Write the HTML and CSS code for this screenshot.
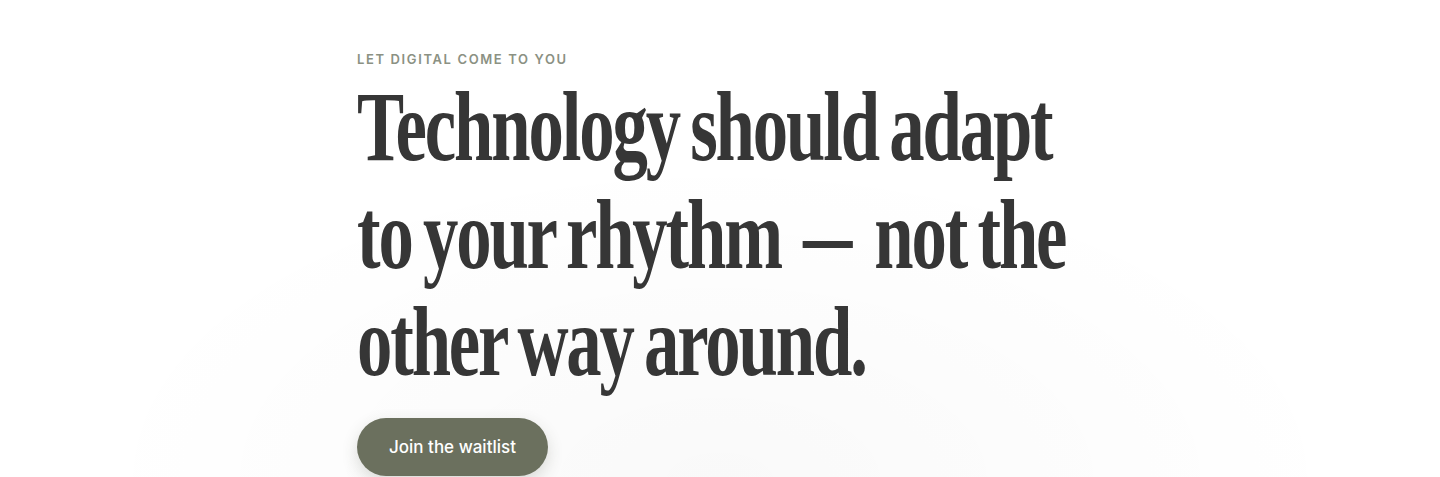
FILE: index.html
```html
<!DOCTYPE html>
<html lang="en">
<head>
<meta charset="utf-8">
<title>Let digital come to you</title>
<link rel="stylesheet" href="styles.css">
</head>
<body>
<main class="hero">
  <div class="hero-inner">
    <p class="eyebrow">Let digital come to you</p>
    <h1 class="headline">
      <span class="line">Technology should adapt</span>
      <span class="line">to your rhythm <span class="dash">—</span> not the</span>
      <span class="line">other way around.</span>
    </h1>
    <a class="cta" href="#">Join the waitlist</a>
  </div>
</main>
</body>
</html>
```
FILE: styles.css
```css
* { box-sizing: border-box; }
html, body {
  margin: 0;
  padding: 0;
  height: 100%;
}
body {
  background: #ffffff;
  font-family: Inter, "Liberation Sans", sans-serif;
  overflow: hidden;
}
.hero {
  min-height: 477px;
  padding-top: 51px;
  background:
    radial-gradient(ellipse 640px 330px at 720px 480px, rgba(0,0,0,0.022), rgba(0,0,0,0) 100%);
}
.hero-inner {
  width: 726px;
  margin: 0 auto;
  display: flex;
  flex-direction: column;
  align-items: flex-start;
}
.eyebrow {
  margin: 0;
  font-size: 13px;
  line-height: 16px;
  font-weight: 600;
  letter-spacing: 0.125em;
  text-transform: uppercase;
  color: #8b9183;
}
.headline {
  margin: 6px 0 0 0;
  font-family: "Liberation Serif", "Times New Roman", serif;
  font-weight: 700;
  font-size: 100px;
  line-height: 107.5px;
  letter-spacing: -0.03em;
  word-spacing: -0.06em;
  color: #363636;
  white-space: nowrap;
  transform: scaleX(0.707);
  transform-origin: left top;
}
.line { display: block; }
.dash {
  display: inline-block;
  letter-spacing: 0;
  transform: scaleX(0.7);
}
.cta {
  margin-top: 22px;
  display: inline-flex;
  align-items: center;
  justify-content: center;
  height: 58px;
  padding: 0 32px;
  border-radius: 29px;
  background: #6b705e;
  color: #ffffff;
  text-decoration: none;
  font-size: 17px;
  font-weight: 500;
  box-shadow: 0 6px 16px rgba(60, 64, 50, 0.18);
}
```
